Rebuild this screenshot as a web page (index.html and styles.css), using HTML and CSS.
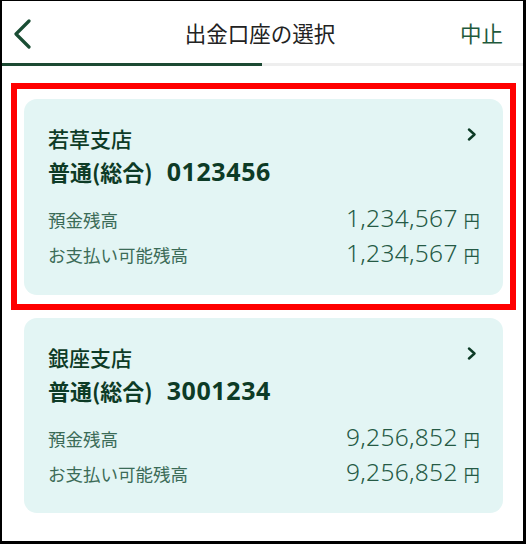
FILE: index.html
```html
<!DOCTYPE html>
<html lang="ja">

<head>
    <meta charset="utf-8">
    <link rel="stylesheet" href="styles.css">
</head>

<body>
    <div class="screen">
        <div class="header">
            <span class="back">
                <svg width="20" height="30" viewBox="0 0 20 30">
                    <polyline points="16,2 3,15 16,28" fill="none" stroke="#1a4d34" stroke-width="3.2"
                        stroke-linecap="round" stroke-linejoin="round" />
                </svg>
            </span>
            <span class="title">出金口座の選択</span>
            <span class="cancel">中止</span>
        </div>
        <div class="progress">
            <div class="done"></div>
            <div class="rest"></div>
        </div>

        <div class="list">
            <div class="selected">
                <div class="card">
                    <div class="top">
                        <div class="branch">若草支店</div>
                        <svg class="chev" width="10" height="13" viewBox="0 0 10 13">
                            <polyline points="2,1.5 7.5,6.5 2,11.5" fill="none" stroke="#0d3b26" stroke-width="2.4"
                                stroke-linecap="round" stroke-linejoin="round" />
                        </svg>
                    </div>
                    <div class="account"><span class="type">普通(総合)</span><span class="num">0123456</span></div>
                    <div class="row">
                        <span class="label">預金残高</span>
                        <span class="amount">1,234,567<span class="yen">円</span></span>
                    </div>
                    <div class="row">
                        <span class="label">お支払い可能残高</span>
                        <span class="amount">1,234,567<span class="yen">円</span></span>
                    </div>
                </div>
            </div>

            <div class="card second">
                <div class="top">
                    <div class="branch">銀座支店</div>
                    <svg class="chev" width="10" height="13" viewBox="0 0 10 13">
                        <polyline points="2,1.5 7.5,6.5 2,11.5" fill="none" stroke="#0d3b26" stroke-width="2.4"
                            stroke-linecap="round" stroke-linejoin="round" />
                    </svg>
                </div>
                <div class="account"><span class="type">普通(総合)</span><span class="num">3001234</span></div>
                <div class="row">
                    <span class="label">預金残高</span>
                    <span class="amount">9,256,852<span class="yen">円</span></span>
                </div>
                <div class="row">
                    <span class="label">お支払い可能残高</span>
                    <span class="amount">9,256,852<span class="yen">円</span></span>
                </div>
            </div>
        </div>
    </div>
</body>

</html>
```

FILE: styles.css
```css
html,
body {
    margin: 0;
    padding: 0;
    background: #fff;
}

body {
    font-family: "Noto Sans CJK JP", "Noto Sans", sans-serif;
}

.screen {
    width: 526px;
    height: 544px;
    box-sizing: border-box;
    border: solid #000;
    border-width: 1px 3px 3px 2px;
    overflow: hidden;
}

.header {
    height: 62px;
    display: flex;
    align-items: center;
    justify-content: space-between;
    padding: 0 20px 0 11px;
}

.back {
    width: 46px;
    display: flex;
    padding-top: 3px;
}

.title {
    font-size: 21.5px;
    color: #222;
    padding-left: 4px;
}

.cancel {
    width: 46px;
    white-space: nowrap;
    text-align: right;
    font-size: 21.5px;
    color: #1f5a3d;
}

.progress {
    display: flex;
    height: 3px;
}

.progress .done {
    width: 260px;
    background: #1c4a33;
}

.progress .rest {
    flex: 1;
    background: #eeeeee;
}

.list {
    padding: 17px 0 0 9px;
    width: 505px;
}

.selected {
    border: 6px solid #ff0000;
    padding: 10px 7px 9px 7px;
}

.card {
    background: #e3f5f4;
    border-radius: 13px;
    padding: 24px 23px 21px 24px;
    height: 196px;
    box-sizing: border-box;
    color: #0d3b26;
}

.card.second {
    margin: 8px 13px 0 13px;
    height: 195px;
}

.top {
    display: flex;
    justify-content: space-between;
    align-items: center;
    height: 30px;
}

.branch {
    font-size: 21px;
    font-weight: 500;
    line-height: 30px;
}

.chev {
    margin-right: 3px;
    margin-top: -8px;
}

.account {
    margin-top: 3px;
    line-height: 30px;
    font-weight: 700;
    display: flex;
    align-items: baseline;
}

.account .type {
    font-size: 22px;
}

.account .num {
    font-size: 25px;
    letter-spacing: 0.6px;
    margin-left: 14px;
    font-family: "Noto Sans", sans-serif;
}

.row {
    display: flex;
    justify-content: space-between;
    align-items: baseline;
}

.row:nth-of-type(3) {
    margin-top: 15px;
    height: 34px;
    line-height: 34px;
}

.row:nth-of-type(4) {
    height: 35px;
    line-height: 35px;
}

.label {
    font-size: 17.5px;
    color: #3b6b57;
}

.amount {
    font-family: "Noto Sans", sans-serif;
    font-size: 24.5px;
    letter-spacing: 0.3px;
    font-weight: 300;
    color: #255a45;
}

.yen {
    font-family: "Noto Sans CJK JP", sans-serif;
    font-size: 16px;
    font-weight: 400;
    margin-left: 6px;
}
```
